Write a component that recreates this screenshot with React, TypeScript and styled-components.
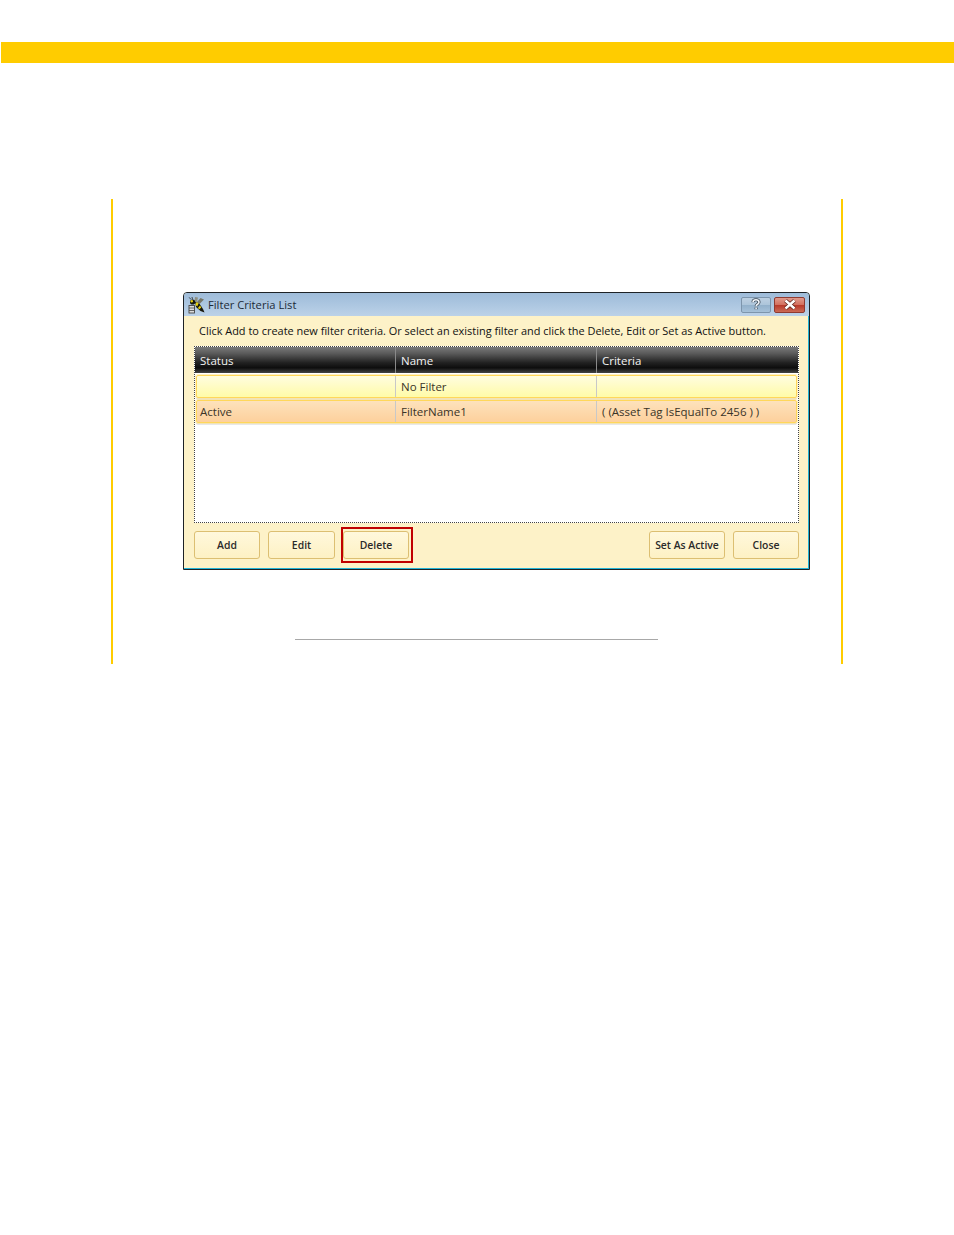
import React from 'react';
import styled, { createGlobalStyle } from 'styled-components';

const GlobalStyle = createGlobalStyle`
  html, body {
    margin: 0;
    padding: 0;
    background: #fff;
  }
`;

const Page = styled.div`
  width: 954px;
  height: 1235px;
  padding-top: 42px;
  box-sizing: border-box;
  overflow: hidden;
`;

const TopBar = styled.div`
  height: 21px;
  margin-left: 1px;
  background: #ffcc00;
`;

const Section = styled.div`
  width: 732px;
  height: 465px;
  margin: 136px 0 0 111px;
  border-left: 2px solid #ffcc00;
  border-right: 2px solid #ffcc00;
  display: flex;
  flex-direction: column;
  align-items: flex-start;
  padding-top: 93px;
  box-sizing: border-box;
`;

const Window = styled.div`
  width: 627px;
  height: 278px;
  margin-left: 70px;
  box-sizing: border-box;
  border: 1px solid #1e2226;
  border-radius: 4px 4px 0 0;
  background: #fdf2c8;
  display: flex;
  flex-direction: column;
  font-family: "Open Sans", "Noto Sans", sans-serif;
  box-shadow: inset -1px -1px 0 #22b5d8;
`;

const TitleBar = styled.div`
  height: 23px;
  padding: 0 4px;
  display: flex;
  align-items: center;
  gap: 3px;
  border-radius: 3px 3px 0 0;
  background: linear-gradient(#9fbcd9, #a9c4df 40%, #bcd2e8);
  flex: none;
`;

const TitleText = styled.span`
  flex: 1;
  font-size: 11.2px;
  color: #1c2a38;
`;

const CaptionButton = styled.div<{ $danger?: boolean }>`
  width: ${(p) => (p.$danger ? 31 : 30)}px;
  height: 16px;
  box-sizing: border-box;
  border: 1px solid ${(p) => (p.$danger ? '#8f3a30' : '#7d95ac')};
  border-radius: 2px;
  display: flex;
  align-items: center;
  justify-content: center;
  background: ${(p) => (p.$danger
    ? 'linear-gradient(#e09a8c, #d3705f 48%, #b8392a 52%, #cb6a55)'
    : 'linear-gradient(#bdd0e2, #adc5da 48%, #93b1cb 52%, #a6c1d9)')};
`;

const Hint = styled.div`
  height: 30px;
  padding: 0 0 2px 15px;
  box-sizing: border-box;
  display: flex;
  align-items: center;
  font-size: 10.95px;
  color: #111;
  flex: none;
`;

const Grid = styled.div`
  width: 605px;
  height: 177px;
  margin-left: 10px;
  box-sizing: border-box;
  border: 1px dotted #444;
  background: #fff;
  flex: none;
`;

const HeaderRow = styled.div`
  height: 26px;
  display: grid;
  grid-template-columns: 201px 201px 1fr;
  background: linear-gradient(#7a7a7a, #5a5a5a 25%, #222 60%, #0d0d0d 80%, #444);
`;

const HeaderCell = styled.div`
  padding-left: 5px;
  display: flex;
  align-items: center;
  font-size: 11.5px;
  color: #f2f2f2;
  border-right: 1px solid #8a8a8a;

  &:last-child {
    border-right: 0;
  }
`;

const Row = styled.div<{ $active?: boolean }>`
  height: 23px;
  margin: 2px 1px 0;
  display: grid;
  grid-template-columns: 199px 201px 1fr;
  box-sizing: border-box;
  border: 1px solid #ffd75a;
  border-radius: 2px;
  box-shadow: 0 0 0 1px rgba(255, 222, 120, 0.45), 0 2px 0 #e8e8e8;
  background: ${(p) => (p.$active
    ? 'linear-gradient(#fde2bc, #fdd09c)'
    : 'linear-gradient(#fffde0, #fffba8)')};
`;

const Cell = styled.div`
  padding-left: 5px;
  display: flex;
  align-items: center;
  font-size: 11.5px;
  color: #3a3428;
  border-right: 1px solid #c8c8c8;

  &:first-child {
    padding-left: 3px;
  }

  &:last-child {
    border-right: 0;
  }
`;

const Footer = styled.div`
  height: 36px;
  margin-top: 4px;
  padding: 0 10px;
  display: flex;
  align-items: center;
  flex: none;
`;

const Button = styled.div<{ $width: number }>`
  width: ${(p) => p.$width}px;
  height: 28px;
  box-sizing: border-box;
  border: 1px solid #dcbf72;
  border-radius: 3px;
  background: linear-gradient(#fff8dc, #fdf1c4);
  display: flex;
  align-items: center;
  justify-content: center;
  font-size: 10.4px;
  font-weight: 600;
  color: #2a2a2a;
  flex: none;
`;

const Highlight = styled.div`
  margin-left: 6px;
  padding: 2px 2px 2px 0;
  border: 2px solid #c00000;
  flex: none;
`;

const FooterGap = styled.div`
  width: 8px;
  flex: none;
`;

const FooterSpacer = styled.div`
  flex: 1;
`;

const Rule = styled.div`
  width: 363px;
  height: 1px;
  margin: 69px 0 0 182px;
  background: #a8a8a8;
`;

const WaspIcon = () => (
  <svg width="17" height="18" viewBox="0 0 17 18">
    <rect x="1" y="9.5" width="5.5" height="7.5" fill="#dcdcdc" stroke="#444" strokeWidth="0.9" />
    <path d="M1 12h5.5M1 14.5h5.5" stroke="#444" strokeWidth="0.8" />
    <path d="M7 5.5l4 1.5 4 6 1.5 3.5-4-1.5-4.5-4z" fill="#17170c" />
    <path d="M8.5 6l2.3 1-1.6 3.4-1.9-1.6zM12 9.5l1.3 2-2 1.8-1.4-1.3z" fill="#e6d014" />
    <path d="M9 6l3.5-4 3.5 1.5-4.5 4.5z" fill="#77776a" />
    <path d="M6.5 5l.5-4 3 .5-1 4.5z" fill="#8f8f80" />
    <circle cx="4.6" cy="6" r="2.6" fill="#15150c" />
    <circle cx="3.8" cy="5.2" r="1.2" fill="#e6d014" />
    <path d="M3 3.5L1.2 1.4M4.5 3.4L4 1" stroke="#222" strokeWidth="0.8" />
  </svg>
);

const helpPath = 'M3 4.2C3 2.6 4.4 1.8 6 1.8s3 .9 3 2.4C9 6.2 6.1 6.3 6.1 8.3M6.1 9.5v1.7';

const HelpGlyph = () => (
  <svg width="12" height="13" viewBox="0 0 12 13">
    <path d={helpPath} fill="none" stroke="#36424f" strokeWidth="3" />
    <path d={helpPath} fill="none" stroke="#f0f4f8" strokeWidth="1.6" />
  </svg>
);

const closePath = 'M3.5 1.5l9 8M12.5 1.5l-9 8';

const CloseGlyph = () => (
  <svg width="16" height="11" viewBox="0 0 16 11">
    <path d={closePath} stroke="#5a1e16" strokeWidth="3.8" />
    <path d={closePath} stroke="#fff" strokeWidth="2.4" />
  </svg>
);

const columns = ['Status', 'Name', 'Criteria'];
const rows = [
  { status: '', name: 'No Filter', criteria: '', active: false },
  { status: 'Active', name: 'FilterName1', criteria: '( (Asset Tag IsEqualTo 2456 ) )', active: true },
];

const App: React.FC = () => (
  <Page>
    <GlobalStyle />
    <TopBar />
    <Section>
      <Window>
        <TitleBar>
          <WaspIcon />
          <TitleText>Filter Criteria List</TitleText>
          <CaptionButton><HelpGlyph /></CaptionButton>
          <CaptionButton $danger><CloseGlyph /></CaptionButton>
        </TitleBar>
        <Hint>Click Add to create new filter criteria. Or select an existing filter and click the Delete, Edit or Set as Active button.</Hint>
        <Grid>
          <HeaderRow>
            {columns.map((column) => <HeaderCell key={column}>{column}</HeaderCell>)}
          </HeaderRow>
          {rows.map((row) => (
            <Row key={row.name} $active={row.active}>
              <Cell>{row.status}</Cell>
              <Cell>{row.name}</Cell>
              <Cell>{row.criteria}</Cell>
            </Row>
          ))}
        </Grid>
        <Footer>
          <Button $width={66}>Add</Button>
          <FooterGap />
          <Button $width={67}>Edit</Button>
          <Highlight>
            <Button $width={66}>Delete</Button>
          </Highlight>
          <FooterSpacer />
          <Button $width={76}>Set As Active</Button>
          <FooterGap />
          <Button $width={66}>Close</Button>
        </Footer>
      </Window>
      <Rule />
    </Section>
  </Page>
);

export default App;
